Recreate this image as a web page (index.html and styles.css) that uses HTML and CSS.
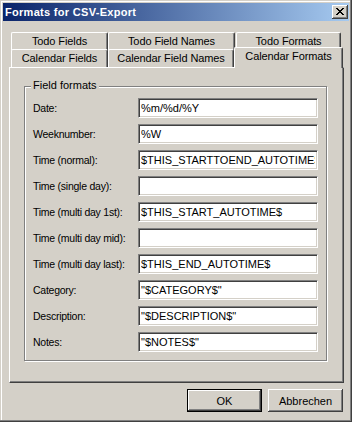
FILE: index.html
```html
<!DOCTYPE html>
<html lang="de">
<head>
    <meta charset="UTF-8">
    <meta name="viewport" content="width=device-width, initial-scale=1.0">
    <title>Formats for CSV-Export</title>
    <link rel="stylesheet" href="styles.css">
</head>
<body>
    <div class="win">
        <div class="title">
            <span>Formats for CSV-Export</span>
            <div class="close">
                <svg width="8" height="7" viewBox="0 0 8 7" shape-rendering="crispEdges">
                    <path d="M0 0h2v1H0zM6 0h2v1H6zM1 1h2v1H1zM5 1h2v1H5zM2 2h4v1H2zM3 3h2v1H3zM2 4h4v1H2zM1 5h2v1H1zM5 5h2v1H5zM0 6h2v1H0zM6 6h2v1H6z" fill="#000"/>
                </svg>
            </div>
        </div>

        <div class="tabs">
            <ul class="row back">
                <li class="tab t1">Todo Fields</li>
                <li class="tab t2">Todo Field Names</li>
                <li class="tab t3">Todo Formats</li>
            </ul>
            <ul class="row front">
                <li class="tab t1">Calendar Fields</li>
                <li class="tab c2">Calendar Field Names</li>
                <li class="tab sel">Calendar Formats</li>
            </ul>
            <div class="panel">
                <div class="group">
                    <span class="cap">Field formats</span>
                    <div class="fields">
                        <label>Date:</label>
                        <input type="text" value="%m/%d/%Y">
                        <label>Weeknumber:</label>
                        <input type="text" value="%W">
                        <label>Time (normal):</label>
                        <input type="text" value="$THIS_STARTTOEND_AUTOTIME$">
                        <label>Time (single day):</label>
                        <input type="text" value="">
                        <label>Time (multi day 1st):</label>
                        <input type="text" value="$THIS_START_AUTOTIME$">
                        <label>Time (multi day mid):</label>
                        <input type="text" value="">
                        <label>Time (multi day last):</label>
                        <input type="text" value="$THIS_END_AUTOTIME$">
                        <label>Category:</label>
                        <input type="text" value="&quot;$CATEGORY$&quot;">
                        <label>Description:</label>
                        <input type="text" value="&quot;$DESCRIPTION$&quot;">
                        <label>Notes:</label>
                        <input type="text" value="&quot;$NOTES$&quot;">
                    </div>
                </div>
            </div>
        </div>

        <div class="btns">
            <button class="btn def">OK</button>
            <button class="btn">Abbrechen</button>
        </div>
    </div>
</body>
</html>
```

FILE: styles.css
```css
*{
    box-sizing: border-box;
}
body{
    margin: 0;
    font-family: "Liberation Sans", Arial, sans-serif;
    font-size: 11px;
    color: #000;
    background: #D4D0C8;
}
.win{
    width: 352px;
    height: 422px;
    padding: 3px;
    background: #D4D0C8;
    box-shadow: inset -1px -1px #404040, inset -2px -2px #808080, inset 1px 1px #D4D0C8, inset 2px 2px #fff;
    display: flex;
    flex-direction: column;
}
.title{
    height: 18px;
    background: linear-gradient(to right, #0A246A, #A6CAF0);
    color: #fff;
    font-weight: bold;
    letter-spacing: 0.3px;
    display: flex;
    align-items: center;
    justify-content: space-between;
    padding: 0 1px 0 2px;
}
.close{
    width: 16px;
    height: 14px;
    background: #D4D0C8;
    box-shadow: inset -1px -1px #404040, inset 1px 1px #fff, inset -2px -2px #808080;
    display: flex;
    align-items: center;
    justify-content: center;
    padding-bottom: 1px;
}
.close svg{
    display: block;
}
.tabs{
    margin: 11px 5px 0 6px;
}
.row{
    list-style: none;
    margin: 0;
    padding: 0 0 0 2px;
    display: flex;
    align-items: flex-start;
    height: 18px;
}
.row.front{
    margin-top: -1px;
    position: relative;
    z-index: 2;
}
.tab{
    height: 18px;
    background: #D4D0C8;
    border: 1px solid #fff;
    border-bottom: 0;
    border-right-color: #404040;
    border-radius: 2px 2px 0 0;
    box-shadow: inset -1px 0 #808080;
    text-align: center;
    line-height: 16px;
    white-space: nowrap;
    letter-spacing: -0.1px;
}
.t1{
    width: 97px;
}
.t2{
    width: 127px;
}
.t3{
    width: 105px;
    margin-left: 1px;
}
.c2{
    width: 126px;
}
.sel{
    width: 109px;
    height: 21px;
    margin-top: -2px;
    line-height: 17px;
    position: relative;
}
.panel{
    position: relative;
    z-index: 1;
    height: 316px;
    border: 1px solid;
    border-color: #fff #404040 #404040 #fff;
    box-shadow: inset -1px -1px #808080;
    padding: 18px 0 0 14px;
}
.group{
    position: relative;
    width: 303px;
    height: 275px;
    border: 1px solid #808080;
    box-shadow: 1px 1px #fff, inset 1px 1px #fff;
    padding: 11px 0 0 8px;
}
.group .cap{
    position: absolute;
    top: -8px;
    left: 6px;
    padding: 0 2px;
    line-height: 13px;
    background: #D4D0C8;
}
.fields{
    display: grid;
    grid-template-columns: 105px 180px;
    grid-auto-rows: 20px;
    row-gap: 6px;
    align-items: center;
}
.fields label{
    white-space: nowrap;
    font-size: 10.5px;
    letter-spacing: -0.25px;
}
.fields input{
    width: 180px;
    height: 20px;
    margin: 0;
    padding: 0 2px;
    font: inherit;
    color: #000;
    background: #fff;
    border: 1px solid;
    border-color: #808080 #fff #fff #808080;
    box-shadow: inset 1px 1px #404040, inset -1px -1px #D4D0C8;
    outline: none;
}
.btns{
    display: flex;
    justify-content: flex-end;
    gap: 6px;
    margin: 6px 6px 0 0;
}
.btn{
    width: 75px;
    height: 23px;
    margin: 0;
    padding: 0;
    font: inherit;
    color: #000;
    background: #D4D0C8;
    border: 0;
    box-shadow: inset -1px -1px #404040, inset 1px 1px #fff, inset -2px -2px #808080;
}
.btn.def{
    border: 1px solid #000;
}
```
